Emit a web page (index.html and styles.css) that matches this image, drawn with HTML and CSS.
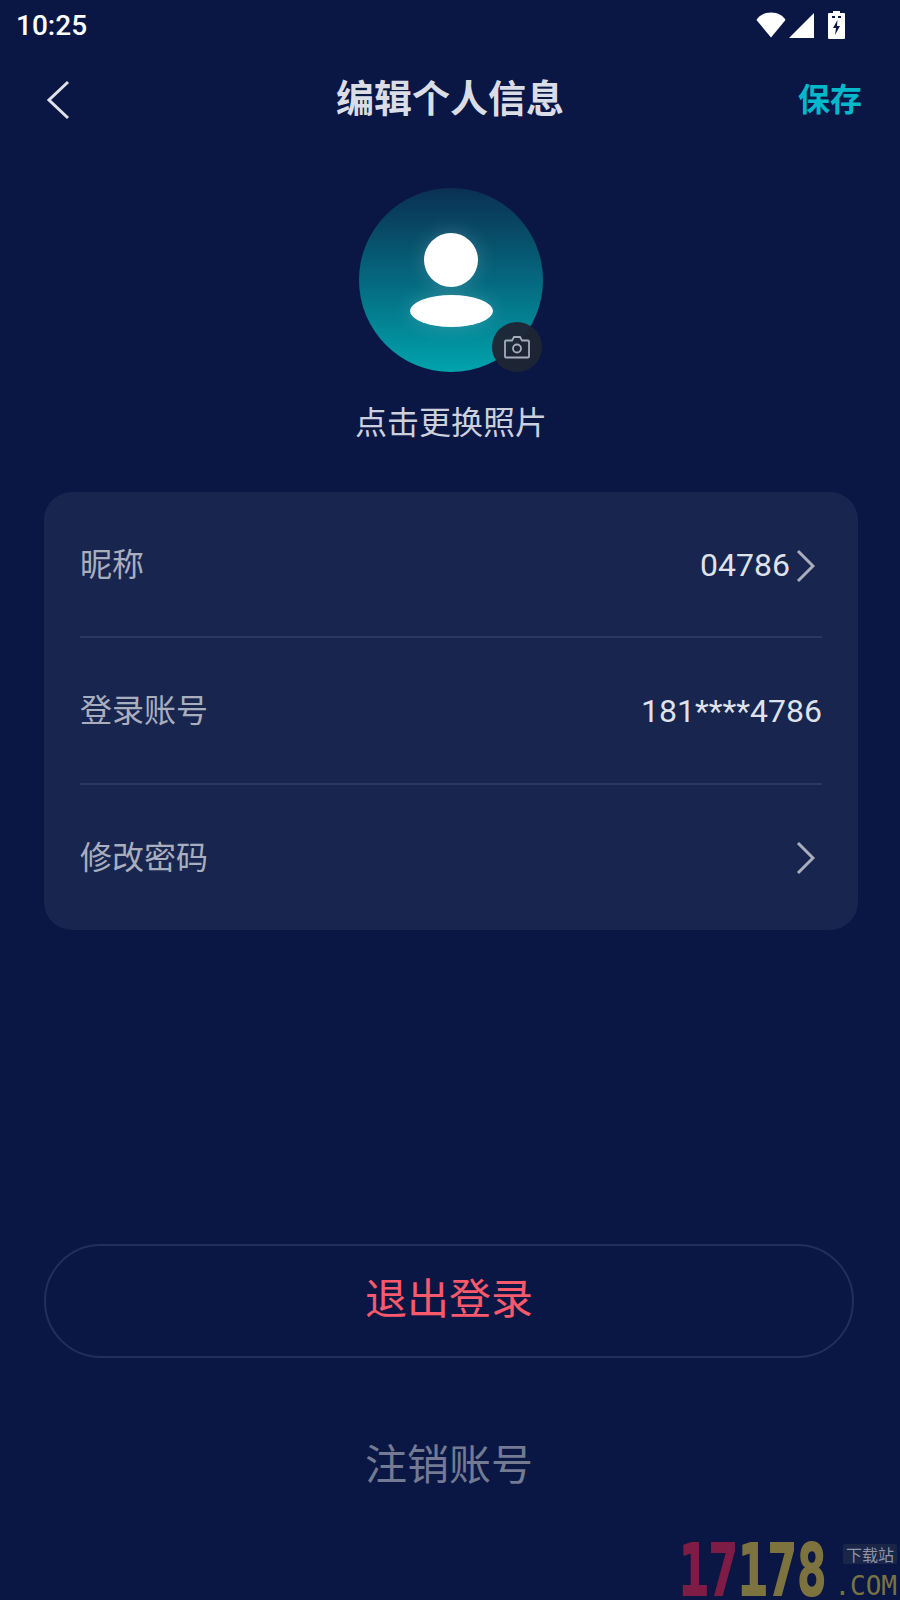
FILE: index.html
```html
<!DOCTYPE html>
<html lang="zh-CN">
<head>
<meta charset="utf-8">
<title>编辑个人信息</title>
<link rel="stylesheet" href="styles.css">
</head>
<body>
<div class="screen">
  <div class="status">
    <span class="time">10:25</span>
    <div class="status-icons">
      <svg class="wifi" width="30" height="26" viewBox="0 0 30 26"><path d="M15 25.500 0.500 8C2.500 4 8 0.500 15 0.500S27.500 4 29.500 8z" fill="#fff"/></svg>
      <svg class="signal" width="25" height="25" viewBox="0 0 25 25"><path d="M25 0v25H0z" fill="#fff"/></svg>
      <svg class="battery" width="17" height="28" viewBox="0 0 17 28"><path d="M5 0h7v2h4a1 1 0 0 1 1 1v24a1 1 0 0 1-1 1H1a1 1 0 0 1-1-1V3a1 1 0 0 1 1-1h4z" fill="#fff"/><path d="M4 5h3v2H4zM10 5h3v2h-3z" fill="#0a1745"/><path d="M9.500 9 5 17h3l-1 7 5-9H9z" fill="#0a1745"/></svg>
    </div>
  </div>
  <header class="nav">
    <svg class="back" width="26" height="42" viewBox="0 0 26 42"><path d="M23 3 4 21l19 18" fill="none" stroke="#dfe2ea" stroke-width="3"/></svg>
    <h1 class="title">编辑个人信息</h1>
    <span class="save">保存</span>
  </header>
  <section class="avatar-block">
    <div class="avatar">
      <div class="head"></div>
      <div class="shoulders"></div>
      <div class="camera">
        <svg width="26" height="24" viewBox="0 0 26 24"><path d="M2 5.500h6L10 2h6l2 3.500h6a1 1 0 0 1 1 1V21.500a1 1 0 0 1-1 1H2a1 1 0 0 1-1-1V6.500a1 1 0 0 1 1-1z" fill="none" stroke="#a6acb9" stroke-width="1.800"/><circle cx="13" cy="13.500" r="4" fill="none" stroke="#a6acb9" stroke-width="1.800"/></svg>
      </div>
    </div>
    <p class="change">点击更换照片</p>
  </section>
  <section class="card">
    <div class="row">
      <span class="label">昵称</span>
      <div class="value-wrap">
        <span class="value">04786</span>
        <svg class="chev" width="19" height="34" viewBox="0 0 19 34"><path d="M2 2l15 15L2 32" fill="none" stroke="#a9aebd" stroke-width="3"/></svg>
      </div>
    </div>
    <div class="row">
      <span class="label">登录账号</span>
      <div class="value-wrap"><span class="value">181****4786</span></div>
    </div>
    <div class="row">
      <span class="label">修改密码</span>
      <div class="value-wrap">
        <svg class="chev" width="19" height="34" viewBox="0 0 19 34"><path d="M2 2l15 15L2 32" fill="none" stroke="#a9aebd" stroke-width="3"/></svg>
      </div>
    </div>
  </section>
  <div class="spacer"></div>
  <div class="logout">退出登录</div>
  <div class="cancel">注销账号</div>
  <div class="watermark">
    <div class="wm-digits"><span class="wm-red">17</span><span class="wm-olive">178</span></div>
    <div class="wm-side">
      <span class="wm-tag">下载站</span>
      <span class="wm-com">.COM</span>
    </div>
  </div>
</div>
</body>
</html>
```
FILE: styles.css
```css
* { box-sizing: border-box; }
html, body { margin: 0; padding: 0; }
body {
  width: 900px;
  height: 1600px;
  background: #0a1745;
  font-family: Roboto, "Noto Sans CJK SC", sans-serif;
  overflow: hidden;
}
.screen {
  position: relative;
  width: 900px;
  height: 1600px;
  display: flex;
  flex-direction: column;
}
.status {
  height: 50px;
  padding: 0 55px 0 16px;
  display: flex;
  align-items: center;
  justify-content: space-between;
}
.time {
  font-family: Roboto, sans-serif;
  font-weight: 500;
  font-size: 28px;
  color: #fff;
}
.status-icons { display: flex; align-items: center; gap: 3px; }
.status-icons .battery { margin-left: 11px; }
.nav {
  height: 98px;
  padding: 6px 38px 4px 45px;
  display: flex;
  align-items: center;
  justify-content: space-between;
  position: relative;
}
.title {
  position: absolute;
  left: 0;
  right: 0;
  top: 18px;
  margin: 0;
  text-align: center;
  font-family: "Noto Sans CJK SC", sans-serif;
  font-size: 38px;
  font-weight: 700;
  line-height: 56px;
  color: #dadde6;
}
.save {
  margin-bottom: 6px;
  font-family: "Noto Sans CJK SC", sans-serif;
  font-size: 32px;
  font-weight: 700;
  color: #00b9cb;
}
.avatar-block {
  padding: 40px 0 0 2px;
  display: flex;
  flex-direction: column;
  align-items: center;
}
.avatar {
  position: relative;
  width: 184px;
  height: 184px;
  border-radius: 50%;
  background: linear-gradient(180deg, #0a3052 0%, #05687f 50%, #00a3ac 100%);
}
.head {
  position: absolute;
  left: 65px;
  top: 45px;
  width: 54px;
  height: 54px;
  border-radius: 50%;
  background: #fff;
  box-shadow: 0 0 20px rgba(255, 255, 255, .18);
}
.shoulders {
  position: absolute;
  left: 51px;
  top: 107px;
  width: 83px;
  height: 32px;
  border-radius: 50%;
  background: #fff;
  box-shadow: 0 0 20px rgba(255, 255, 255, .18);
}
.camera {
  position: absolute;
  left: 133px;
  top: 134px;
  width: 50px;
  height: 50px;
  border-radius: 50%;
  background: rgba(30, 37, 52, .96);
  display: flex;
  align-items: center;
  justify-content: center;
}
.change {
  margin: 25px 0 0;
  font-family: "Noto Sans CJK SC", sans-serif;
  font-size: 32px;
  line-height: 46px;
  color: #ccd0dc;
}
.card {
  margin: 49px 42px 0 44px;
  height: 438px;
  border-radius: 28px;
  background: #18264f;
  padding: 0 36px 1px;
  display: flex;
  flex-direction: column;
}
.row {
  flex: 1;
  display: flex;
  align-items: center;
  justify-content: space-between;
  padding-bottom: 4px;
  border-bottom: 2px solid #2a3760;
}
.row:last-child { border-bottom: 0; padding-bottom: 4px; }
.label {
  font-family: "Noto Sans CJK SC", sans-serif;
  font-size: 32px;
  color: #a9aebf;
}
.value-wrap { display: flex; align-items: center; gap: 6px; padding-top: 5px; }
.value { font-size: 32px; color: #dfe2ea; }
.chev { margin: 2px 7px 0 0; }
.spacer { flex: 0 0 314px; }
.logout {
  margin: 0 46px 0 44px;
  height: 114px;
  padding-bottom: 12px;
  border: 2px solid #222f5a;
  border-radius: 57px;
  display: flex;
  align-items: center;
  justify-content: center;
  font-family: "Noto Sans CJK SC", sans-serif;
  font-size: 42px;
  color: #f9596a;
}
.cancel {
  margin: 73px 46px 0 44px;
  height: 62px;
  text-align: center;
  font-family: "Noto Sans CJK SC", sans-serif;
  font-size: 42px;
  line-height: 62px;
  color: #737a92;
}
.watermark {
  position: absolute;
  left: 679px;
  right: 3px;
  top: 1542px;
  height: 57px;
  display: flex;
  justify-content: space-between;
}
.wm-digits {
  width: 150px;
  height: 57px;
  transform: scaleX(.69);
  transform-origin: left center;
  font-family: "DejaVu Sans Mono", monospace;
  font-weight: 700;
  font-size: 71px;
  line-height: 57px;
  white-space: nowrap;
  -webkit-text-stroke: 2px currentColor;
}
.wm-red { color: #7f1c45; }
.wm-olive { color: #7d733f; }
.wm-side {
  display: flex;
  flex-direction: column;
  align-items: flex-end;
}
.wm-tag {
  margin-top: 2px;
  font-family: "Noto Sans CJK SC", sans-serif;
  font-size: 16px;
  line-height: 20px;
  color: #8d93a8;
  background: #1a2548;
  padding: 0 3px;
  border-radius: 2px;
}
.wm-com {
  margin-top: 9px;
  font-family: "DejaVu Sans Mono", monospace;
  font-size: 26px;
  line-height: 26px;
  color: #7a7340;
}
```
